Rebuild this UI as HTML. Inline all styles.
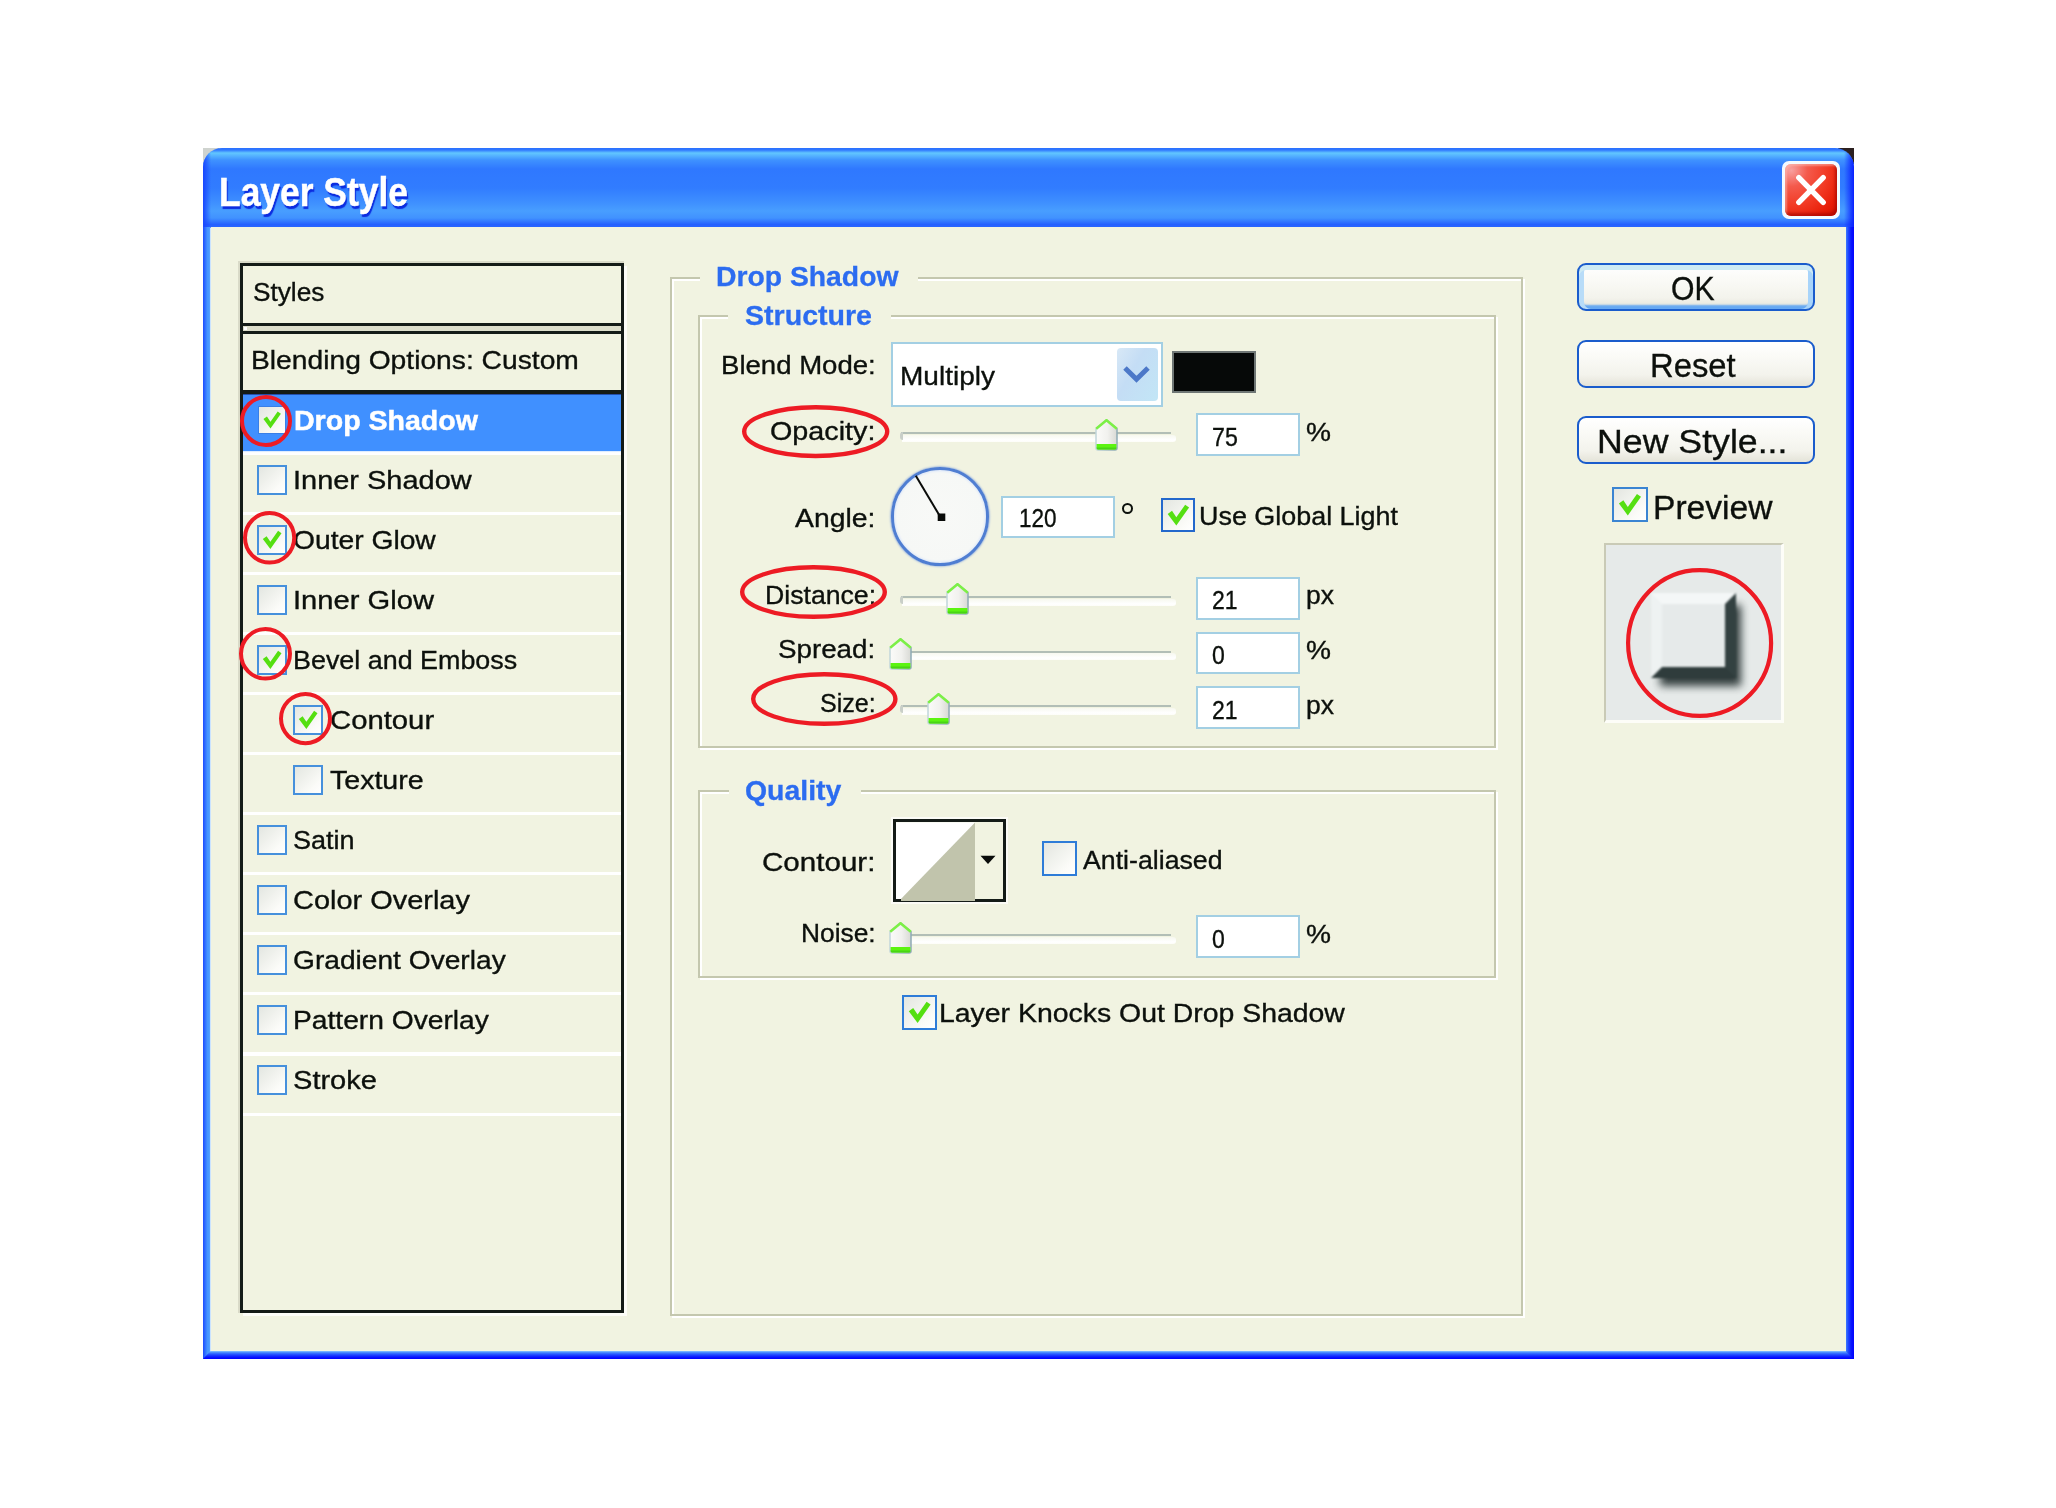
<!DOCTYPE html>
<html><head><meta charset="utf-8"><title>Layer Style</title><style>html,body{margin:0;padding:0;background:#fff;}body{width:2056px;height:1508px;position:relative;overflow:hidden;font-family:"Liberation Sans",sans-serif;}div,svg,span{position:absolute;}.t{white-space:nowrap;line-height:1;transform-origin:0 0;}</style></head><body>
<div style="left:203px;top:148px;width:16px;height:16px;background:#cfd3cf"></div>
<div style="left:1838px;top:148px;width:16px;height:16px;background:#2c2020"></div>
<div style="left:203px;top:148px;width:1651px;height:80px;background:linear-gradient(to bottom,#2a70ff 0px,#3078ff 2px,#62c6ff 5px,#58b8ff 7px,#3f92ff 12px,#2f78ff 21px,#317cff 40px,#3f90ff 55px,#489eff 63px,#4192ff 70px,#2560ff 76.5px,#2a66ff 80px);border-radius:19px 19px 0 0;overflow:hidden"><div style="left:0;top:0;width:8px;height:80px;background:linear-gradient(to right,#1846ff,rgba(40,100,255,0))"></div><div style="left:1641px;top:0;width:10px;height:80px;background:linear-gradient(to left,#0a20ff,rgba(40,100,255,0))"></div></div>
<div style="left:203px;top:1351px;width:1651px;height:8px;background:linear-gradient(to bottom,#8cc4ff 0,#3f80ff 22%,#2048ff 48%,#0814ff 78%,#0000ff 100%)"></div>
<div style="left:203px;top:227px;width:7.5px;height:1132px;background:linear-gradient(to right,#1c4cff 0,#2e6cff 25%,#4594ff 55%,#4a9aff 80%,#b8dcff 100%);clip-path:polygon(0 0,100% 0,100% calc(100% - 8px),0 100%)"></div>
<div style="left:1845.2px;top:227px;width:8.8px;height:1132px;background:linear-gradient(to right,#a4ceff 0,#3a74ff 14%,#1c44ff 38%,#0818ff 68%,#0000ff 100%);clip-path:polygon(0 0,100% 0,100% 100%,0 calc(100% - 8px))"></div>
<div style="left:210.5px;top:227px;width:1635.5px;height:1124px;background:#f1f3e1"></div>
<span class="t" style="left:218.6px;top:172.2px;font-size:40px;font-weight:bold;color:#fff;transform:scaleX(0.8854);-webkit-text-stroke:0.5px #fff;text-shadow:1.5px 2.5px 1px #0c2ce0;">Layer Style</span>
<div style="left:1782px;top:161px;width:58px;height:58px;border-radius:7px;background:#f4faff"></div>
<div style="left:1785px;top:164px;width:52px;height:52px;border-radius:6px;background:radial-gradient(circle at 12% 12%,#f8a0a0 0,#f45a4c 25%,#f23a24 55%,#e81e08 80%,#d81400 100%);box-shadow:inset -2px -3px 3px rgba(150,0,0,.55),inset 2px 2px 2px rgba(255,200,190,.5)"></div>
<svg style="left:1782px;top:161px" width="58" height="58" viewBox="0 0 58 58"><path d="M16.8 16.6 L41.2 41.4 M41.2 16.6 L16.8 41.4" stroke="#fff" stroke-width="5.4" stroke-linecap="round" fill="none"/></svg>
<div style="left:238.2px;top:261.2px;width:386px;height:1052px;background:#d9dac8"></div>
<div style="left:243px;top:266px;width:383.8px;height:1050px;background:#fdfdf8"></div>
<div style="left:240px;top:263px;width:384px;height:1050px;background:#141b17"></div>
<div style="left:243.2px;top:266px;width:377.8px;height:1044px;background:#f1f3e1"></div>
<div style="left:243.2px;top:322.5px;width:377.8px;height:3.5px;background:#141b17"></div>
<div style="left:243.2px;top:326px;width:377.8px;height:5px;background:#dcddca"></div>
<div style="left:243.5px;top:326.5px;width:3px;height:3px;background:#fff"></div>
<div style="left:243.2px;top:331px;width:377.8px;height:3.3px;background:#141b17"></div>
<div style="left:243.2px;top:390.3px;width:377.8px;height:3.7px;background:#141b17"></div>
<div style="left:243.2px;top:394px;width:377.8px;height:57px;background:#4090ff"></div>
<div style="left:243.2px;top:393.6px;width:377.8px;height:1.6px;background:#1a3a90;opacity:.75"></div>
<div style="left:243.2px;top:451.4px;width:377.8px;height:3.2px;background:linear-gradient(to bottom,#cfe4ff,#fff 40%)"></div>
<div style="left:243.2px;top:511.5px;width:377.8px;height:3.2px;background:#fff"></div>
<div style="left:243.2px;top:571.6px;width:377.8px;height:3.2px;background:#fff"></div>
<div style="left:243.2px;top:631.7px;width:377.8px;height:3.2px;background:#fff"></div>
<div style="left:243.2px;top:691.8px;width:377.8px;height:3.2px;background:#fff"></div>
<div style="left:243.2px;top:751.9px;width:377.8px;height:3.2px;background:#fff"></div>
<div style="left:243.2px;top:812.0px;width:377.8px;height:3.2px;background:#fff"></div>
<div style="left:243.2px;top:872.1px;width:377.8px;height:3.2px;background:#fff"></div>
<div style="left:243.2px;top:932.2px;width:377.8px;height:3.2px;background:#fff"></div>
<div style="left:243.2px;top:992.3px;width:377.8px;height:3.2px;background:#fff"></div>
<div style="left:243.2px;top:1052.4px;width:377.8px;height:3.2px;background:#fff"></div>
<div style="left:243.2px;top:1112.5px;width:377.8px;height:3.2px;background:#fff"></div>
<div style="left:258px;top:405.5px;width:28px;height:28px;box-sizing:border-box;border:1.5px solid #3a7fe6;background:linear-gradient(135deg,#e3e6e1 0,#eef0eb 35%,#fbfbf8 75%,#ffffff 100%)"></div>
<svg style="left:258px;top:405.5px" width="28" height="28" viewBox="0 0 35 35"><path d="M6.8 16.2 L11.2 13 L15.6 19.6 L24.6 6.8 L28.6 9.6 L15.6 28 Z" fill="#55df12"/></svg>
<span class="t" style="left:293.5px;top:405.5px;font-size:28.4px;font-weight:bold;color:#fff;transform:scaleX(1.0054);-webkit-text-stroke:0.5px #fff;">Drop Shadow</span>
<div style="left:257.2px;top:464.7px;width:30px;height:30px;box-sizing:border-box;border:2px solid #4690dc;background:linear-gradient(135deg,#e3e6e1 0,#eef0eb 35%,#fbfbf8 75%,#ffffff 100%)"></div>
<span class="t" style="left:293.3px;top:466.9px;font-size:26.2px;font-weight:normal;color:#0c100c;transform:scaleX(1.1059);-webkit-text-stroke:0.35px #0c100c;">Inner Shadow</span>
<div style="left:257.2px;top:524.7px;width:30px;height:30px;box-sizing:border-box;border:2px solid #4690dc;background:linear-gradient(135deg,#e3e6e1 0,#eef0eb 35%,#fbfbf8 75%,#ffffff 100%)"></div>
<svg style="left:257.2px;top:524.7px" width="30" height="30" viewBox="0 0 35 35"><path d="M6.8 16.2 L11.2 13 L15.6 19.6 L24.6 6.8 L28.6 9.6 L15.6 28 Z" fill="#55df12"/></svg>
<span class="t" style="left:293.3px;top:526.9px;font-size:26.2px;font-weight:normal;color:#0c100c;transform:scaleX(1.0777);-webkit-text-stroke:0.35px #0c100c;">Outer Glow</span>
<div style="left:257.2px;top:584.7px;width:30px;height:30px;box-sizing:border-box;border:2px solid #4690dc;background:linear-gradient(135deg,#e3e6e1 0,#eef0eb 35%,#fbfbf8 75%,#ffffff 100%)"></div>
<span class="t" style="left:293.3px;top:586.9px;font-size:26.2px;font-weight:normal;color:#0c100c;transform:scaleX(1.1130);-webkit-text-stroke:0.35px #0c100c;">Inner Glow</span>
<div style="left:257.2px;top:644.7px;width:30px;height:30px;box-sizing:border-box;border:2px solid #4690dc;background:linear-gradient(135deg,#e3e6e1 0,#eef0eb 35%,#fbfbf8 75%,#ffffff 100%)"></div>
<svg style="left:257.2px;top:644.7px" width="30" height="30" viewBox="0 0 35 35"><path d="M6.8 16.2 L11.2 13 L15.6 19.6 L24.6 6.8 L28.6 9.6 L15.6 28 Z" fill="#55df12"/></svg>
<span class="t" style="left:293.3px;top:646.9px;font-size:26.2px;font-weight:normal;color:#0c100c;transform:scaleX(1.0268);-webkit-text-stroke:0.35px #0c100c;">Bevel and Emboss</span>
<div style="left:292.7px;top:704.7px;width:30px;height:30px;box-sizing:border-box;border:2px solid #4690dc;background:linear-gradient(135deg,#e3e6e1 0,#eef0eb 35%,#fbfbf8 75%,#ffffff 100%)"></div>
<svg style="left:292.7px;top:704.7px" width="30" height="30" viewBox="0 0 35 35"><path d="M6.8 16.2 L11.2 13 L15.6 19.6 L24.6 6.8 L28.6 9.6 L15.6 28 Z" fill="#55df12"/></svg>
<span class="t" style="left:329.8px;top:706.9px;font-size:26.2px;font-weight:normal;color:#0c100c;transform:scaleX(1.1179);-webkit-text-stroke:0.35px #0c100c;">Contour</span>
<div style="left:292.7px;top:764.7px;width:30px;height:30px;box-sizing:border-box;border:2px solid #4690dc;background:linear-gradient(135deg,#e3e6e1 0,#eef0eb 35%,#fbfbf8 75%,#ffffff 100%)"></div>
<span class="t" style="left:329.8px;top:766.9px;font-size:26.2px;font-weight:normal;color:#0c100c;transform:scaleX(1.0894);-webkit-text-stroke:0.35px #0c100c;">Texture</span>
<div style="left:257.2px;top:824.7px;width:30px;height:30px;box-sizing:border-box;border:2px solid #4690dc;background:linear-gradient(135deg,#e3e6e1 0,#eef0eb 35%,#fbfbf8 75%,#ffffff 100%)"></div>
<span class="t" style="left:293.3px;top:826.9px;font-size:26.2px;font-weight:normal;color:#0c100c;transform:scaleX(1.0315);-webkit-text-stroke:0.35px #0c100c;">Satin</span>
<div style="left:257.2px;top:884.7px;width:30px;height:30px;box-sizing:border-box;border:2px solid #4690dc;background:linear-gradient(135deg,#e3e6e1 0,#eef0eb 35%,#fbfbf8 75%,#ffffff 100%)"></div>
<span class="t" style="left:293.3px;top:886.9px;font-size:26.2px;font-weight:normal;color:#0c100c;transform:scaleX(1.1052);-webkit-text-stroke:0.35px #0c100c;">Color Overlay</span>
<div style="left:257.2px;top:944.7px;width:30px;height:30px;box-sizing:border-box;border:2px solid #4690dc;background:linear-gradient(135deg,#e3e6e1 0,#eef0eb 35%,#fbfbf8 75%,#ffffff 100%)"></div>
<span class="t" style="left:293.3px;top:946.9px;font-size:26.2px;font-weight:normal;color:#0c100c;transform:scaleX(1.0746);-webkit-text-stroke:0.35px #0c100c;">Gradient Overlay</span>
<div style="left:257.2px;top:1004.7px;width:30px;height:30px;box-sizing:border-box;border:2px solid #4690dc;background:linear-gradient(135deg,#e3e6e1 0,#eef0eb 35%,#fbfbf8 75%,#ffffff 100%)"></div>
<span class="t" style="left:293.3px;top:1006.9px;font-size:26.2px;font-weight:normal;color:#0c100c;transform:scaleX(1.0768);-webkit-text-stroke:0.35px #0c100c;">Pattern Overlay</span>
<div style="left:257.2px;top:1064.7px;width:30px;height:30px;box-sizing:border-box;border:2px solid #4690dc;background:linear-gradient(135deg,#e3e6e1 0,#eef0eb 35%,#fbfbf8 75%,#ffffff 100%)"></div>
<span class="t" style="left:293.3px;top:1066.9px;font-size:26.2px;font-weight:normal;color:#0c100c;transform:scaleX(1.1093);-webkit-text-stroke:0.35px #0c100c;">Stroke</span>
<span class="t" style="left:252.6px;top:278.8px;font-size:26.2px;font-weight:normal;color:#0c100c;transform:scaleX(1.0007);-webkit-text-stroke:0.35px #0c100c;">Styles</span>
<span class="t" style="left:251.0px;top:347.4px;font-size:26.2px;font-weight:normal;color:#0c100c;transform:scaleX(1.0776);-webkit-text-stroke:0.35px #0c100c;">Blending Options: Custom</span>
<div style="left:672px;top:279px;width:853.2px;height:1039px;box-sizing:border-box;border:2.2px solid #fff"></div>
<div style="left:670px;top:277px;width:853.2px;height:1039px;box-sizing:border-box;border:2px solid #c4c7ae"></div>
<div style="left:700px;top:276px;width:218px;height:6px;background:#f1f3e1"></div>
<div style="left:700px;top:317px;width:798px;height:433px;box-sizing:border-box;border:2.2px solid #fff"></div>
<div style="left:698px;top:315px;width:798px;height:433px;box-sizing:border-box;border:2px solid #c4c7ae"></div>
<div style="left:727.5px;top:314px;width:163.0px;height:6px;background:#f1f3e1"></div>
<div style="left:700px;top:792px;width:798px;height:187.5px;box-sizing:border-box;border:2.2px solid #fff"></div>
<div style="left:698px;top:790px;width:798px;height:187.5px;box-sizing:border-box;border:2px solid #c4c7ae"></div>
<div style="left:728.5px;top:789px;width:132.0px;height:6px;background:#f1f3e1"></div>
<span class="t" style="left:716.0px;top:263.3px;font-size:28.0px;font-weight:bold;color:#2c6cf0;transform:scaleX(1.0114);-webkit-text-stroke:0.3px #2c6cf0;">Drop Shadow</span>
<span class="t" style="left:744.5px;top:301.8px;font-size:28.0px;font-weight:bold;color:#2c6cf0;transform:scaleX(1.0203);-webkit-text-stroke:0.3px #2c6cf0;">Structure</span>
<span class="t" style="left:744.6px;top:777.0px;font-size:28.0px;font-weight:bold;color:#2c6cf0;transform:scaleX(1.0157);-webkit-text-stroke:0.3px #2c6cf0;">Quality</span>
<span class="t" style="left:720.8px;top:352.4px;font-size:26.1px;font-weight:normal;color:#0c100c;transform:scaleX(1.0563);-webkit-text-stroke:0.35px #0c100c;">Blend Mode:</span>
<span class="t" style="left:770.2px;top:418.1px;font-size:26.1px;font-weight:normal;color:#0c100c;transform:scaleX(1.1010);-webkit-text-stroke:0.35px #0c100c;">Opacity:</span>
<span class="t" style="left:795.2px;top:505.0px;font-size:26.1px;font-weight:normal;color:#0c100c;transform:scaleX(1.0864);-webkit-text-stroke:0.35px #0c100c;">Angle:</span>
<span class="t" style="left:764.5px;top:581.6px;font-size:26.1px;font-weight:normal;color:#0c100c;transform:scaleX(1.0211);-webkit-text-stroke:0.35px #0c100c;">Distance:</span>
<span class="t" style="left:778.4px;top:636.4px;font-size:26.1px;font-weight:normal;color:#0c100c;transform:scaleX(1.0633);-webkit-text-stroke:0.35px #0c100c;">Spread:</span>
<span class="t" style="left:819.9px;top:690.4px;font-size:26.1px;font-weight:normal;color:#0c100c;transform:scaleX(0.9599);-webkit-text-stroke:0.35px #0c100c;">Size:</span>
<span class="t" style="left:762.2px;top:849.4px;font-size:26.1px;font-weight:normal;color:#0c100c;transform:scaleX(1.1328);-webkit-text-stroke:0.35px #0c100c;">Contour:</span>
<span class="t" style="left:801.0px;top:920.2px;font-size:26.1px;font-weight:normal;color:#0c100c;transform:scaleX(1.0084);-webkit-text-stroke:0.35px #0c100c;">Noise:</span>
<div style="left:891px;top:342px;width:271.5px;height:65px;box-sizing:border-box;border:2.2px solid #a3cfe3;background:#fff"></div>
<div style="left:1116.5px;top:348px;width:41px;height:53px;border-radius:4px;background:linear-gradient(120deg,#d8e8f6 0,#c4ddf5 40%,#c2e6f6 100%)"></div>
<svg style="left:1116px;top:348px" width="42" height="53" viewBox="0 0 42 53"><path d="M9 20 L20.5 31.2 L32 20" stroke="#4c78c8" stroke-width="5" fill="none" stroke-linejoin="miter"/></svg>
<span class="t" style="left:899.6px;top:363.4px;font-size:26.1px;font-weight:normal;color:#0c100c;transform:scaleX(1.0738);-webkit-text-stroke:0.35px #0c100c;">Multiply</span>
<div style="left:1172px;top:351px;width:84px;height:41.5px;background:#6f7775"></div>
<div style="left:1174px;top:353px;width:80px;height:37.5px;background:#060908"></div>
<div style="left:1196.3px;top:413.4px;width:104px;height:42.5px;box-sizing:border-box;border:2.2px solid #a3cfe3;background:#fff"></div>
<span class="t" style="left:1212.0px;top:423.9px;font-size:26.1px;font-weight:normal;color:#0c100c;transform:scaleX(0.8887);-webkit-text-stroke:0.35px #0c100c;">75</span>
<div style="left:1000.8px;top:495.5px;width:114.5px;height:42.3px;box-sizing:border-box;border:2.2px solid #a3cfe3;background:#fff"></div>
<span class="t" style="left:1019.0px;top:505.0px;font-size:26.1px;font-weight:normal;color:#0c100c;transform:scaleX(0.8634);-webkit-text-stroke:0.35px #0c100c;">120</span>
<div style="left:1196.3px;top:577px;width:103.8px;height:42.8px;box-sizing:border-box;border:2.2px solid #a3cfe3;background:#fff"></div>
<span class="t" style="left:1211.6px;top:587.4px;font-size:26.1px;font-weight:normal;color:#0c100c;transform:scaleX(0.8818);-webkit-text-stroke:0.35px #0c100c;">21</span>
<div style="left:1196.3px;top:631.7px;width:103.8px;height:42.5px;box-sizing:border-box;border:2.2px solid #a3cfe3;background:#fff"></div>
<span class="t" style="left:1211.8px;top:642.2px;font-size:26.1px;font-weight:normal;color:#0c100c;transform:scaleX(0.8817);-webkit-text-stroke:0.35px #0c100c;">0</span>
<div style="left:1196.3px;top:686.4px;width:103.8px;height:42.5px;box-sizing:border-box;border:2.2px solid #a3cfe3;background:#fff"></div>
<span class="t" style="left:1211.6px;top:696.9px;font-size:26.1px;font-weight:normal;color:#0c100c;transform:scaleX(0.8818);-webkit-text-stroke:0.35px #0c100c;">21</span>
<div style="left:1196.3px;top:915.4px;width:103.8px;height:43px;box-sizing:border-box;border:2.2px solid #a3cfe3;background:#fff"></div>
<span class="t" style="left:1211.8px;top:926.2px;font-size:26.1px;font-weight:normal;color:#0c100c;transform:scaleX(0.8817);-webkit-text-stroke:0.35px #0c100c;">0</span>
<span class="t" style="left:1306.0px;top:418.8px;font-size:26.1px;font-weight:normal;color:#0c100c;transform:scaleX(1.0772);-webkit-text-stroke:0.35px #0c100c;">%</span>
<span class="t" style="left:1305.7px;top:582.4px;font-size:26.1px;font-weight:normal;color:#0c100c;transform:scaleX(1.0157);-webkit-text-stroke:0.35px #0c100c;">px</span>
<span class="t" style="left:1305.7px;top:637.1px;font-size:26.1px;font-weight:normal;color:#0c100c;transform:scaleX(1.0772);-webkit-text-stroke:0.35px #0c100c;">%</span>
<span class="t" style="left:1305.7px;top:691.8px;font-size:26.1px;font-weight:normal;color:#0c100c;transform:scaleX(1.0157);-webkit-text-stroke:0.35px #0c100c;">px</span>
<span class="t" style="left:1306.3px;top:920.6px;font-size:26.1px;font-weight:normal;color:#0c100c;transform:scaleX(1.0772);-webkit-text-stroke:0.35px #0c100c;">%</span>
<div style="left:1122px;top:503px;width:11px;height:11px;box-sizing:border-box;border:2.6px solid #0c100c;border-radius:50%"></div>
<div style="left:901.5px;top:435px;width:274.5px;height:6.8px;background:linear-gradient(to bottom,#f7f8ef,#ffffff 70%,#fdfdf8);border-radius:0 3px 3px 0"></div>
<div style="left:900.5px;top:432.1px;width:270.5px;height:2.2px;background:#b2beb6"></div>
<div style="left:899.5px;top:432px;width:3px;height:8px;background:#c9cfc8;border-radius:3px 0 0 3px"></div>
<svg style="left:1095.0px;top:419.1px" width="23" height="32" viewBox="0 0 23 32"><defs><linearGradient id="tg" x1="0" x2="1" y1="0" y2="0"><stop offset="0" stop-color="#fbfbf9"/><stop offset=".55" stop-color="#f1f1ee"/><stop offset="1" stop-color="#d8d9d4"/></linearGradient><linearGradient id="ts" x1="0" x2="1" y1="0" y2="0"><stop offset="0" stop-color="#c2d6da"/><stop offset="1" stop-color="#8eaab4"/></linearGradient></defs><path d="M1 9.5 L11.5 0.8 L22 9.5 L22 29 Q22 31 20 31 L3 31 Q1 31 1 29 Z" fill="url(#tg)" stroke="url(#ts)" stroke-width="1.5"/><path d="M1.2 9.8 L11.5 1.2 L21.8 9.8" stroke="#7cf046" stroke-width="2.5" fill="none"/><path d="M1.6 25 L21.4 25 L21.4 29 Q21.4 30.6 19.6 30.6 L3.4 30.6 Q1.6 30.6 1.6 29 Z" fill="#5cf410"/><path d="M1.6 28.6 L21.4 28.6 L21.4 29 Q21.4 30.6 19.6 30.6 L3.4 30.6 Q1.6 30.6 1.6 29 Z" fill="#48d416"/></svg>
<div style="left:901.5px;top:598.8px;width:274.5px;height:6.8px;background:linear-gradient(to bottom,#f7f8ef,#ffffff 70%,#fdfdf8);border-radius:0 3px 3px 0"></div>
<div style="left:900.5px;top:595.9px;width:270.5px;height:2.2px;background:#b2beb6"></div>
<div style="left:899.5px;top:595.8px;width:3px;height:8px;background:#c9cfc8;border-radius:3px 0 0 3px"></div>
<svg style="left:946.2px;top:583.1px" width="23" height="32" viewBox="0 0 23 32"><defs><linearGradient id="tg" x1="0" x2="1" y1="0" y2="0"><stop offset="0" stop-color="#fbfbf9"/><stop offset=".55" stop-color="#f1f1ee"/><stop offset="1" stop-color="#d8d9d4"/></linearGradient><linearGradient id="ts" x1="0" x2="1" y1="0" y2="0"><stop offset="0" stop-color="#c2d6da"/><stop offset="1" stop-color="#8eaab4"/></linearGradient></defs><path d="M1 9.5 L11.5 0.8 L22 9.5 L22 29 Q22 31 20 31 L3 31 Q1 31 1 29 Z" fill="url(#tg)" stroke="url(#ts)" stroke-width="1.5"/><path d="M1.2 9.8 L11.5 1.2 L21.8 9.8" stroke="#7cf046" stroke-width="2.5" fill="none"/><path d="M1.6 25 L21.4 25 L21.4 29 Q21.4 30.6 19.6 30.6 L3.4 30.6 Q1.6 30.6 1.6 29 Z" fill="#5cf410"/><path d="M1.6 28.6 L21.4 28.6 L21.4 29 Q21.4 30.6 19.6 30.6 L3.4 30.6 Q1.6 30.6 1.6 29 Z" fill="#48d416"/></svg>
<div style="left:901.5px;top:653.4px;width:274.5px;height:6.8px;background:linear-gradient(to bottom,#f7f8ef,#ffffff 70%,#fdfdf8);border-radius:0 3px 3px 0"></div>
<div style="left:900.5px;top:650.5px;width:270.5px;height:2.2px;background:#b2beb6"></div>
<div style="left:899.5px;top:650.4px;width:3px;height:8px;background:#c9cfc8;border-radius:3px 0 0 3px"></div>
<svg style="left:888.6px;top:637.9px" width="23" height="32" viewBox="0 0 23 32"><defs><linearGradient id="tg" x1="0" x2="1" y1="0" y2="0"><stop offset="0" stop-color="#fbfbf9"/><stop offset=".55" stop-color="#f1f1ee"/><stop offset="1" stop-color="#d8d9d4"/></linearGradient><linearGradient id="ts" x1="0" x2="1" y1="0" y2="0"><stop offset="0" stop-color="#c2d6da"/><stop offset="1" stop-color="#8eaab4"/></linearGradient></defs><path d="M1 9.5 L11.5 0.8 L22 9.5 L22 29 Q22 31 20 31 L3 31 Q1 31 1 29 Z" fill="url(#tg)" stroke="url(#ts)" stroke-width="1.5"/><path d="M1.2 9.8 L11.5 1.2 L21.8 9.8" stroke="#7cf046" stroke-width="2.5" fill="none"/><path d="M1.6 25 L21.4 25 L21.4 29 Q21.4 30.6 19.6 30.6 L3.4 30.6 Q1.6 30.6 1.6 29 Z" fill="#5cf410"/><path d="M1.6 28.6 L21.4 28.6 L21.4 29 Q21.4 30.6 19.6 30.6 L3.4 30.6 Q1.6 30.6 1.6 29 Z" fill="#48d416"/></svg>
<div style="left:901.5px;top:708px;width:274.5px;height:6.8px;background:linear-gradient(to bottom,#f7f8ef,#ffffff 70%,#fdfdf8);border-radius:0 3px 3px 0"></div>
<div style="left:900.5px;top:705.1px;width:270.5px;height:2.2px;background:#b2beb6"></div>
<div style="left:899.5px;top:705px;width:3px;height:8px;background:#c9cfc8;border-radius:3px 0 0 3px"></div>
<svg style="left:926.8px;top:692.5px" width="23" height="32" viewBox="0 0 23 32"><defs><linearGradient id="tg" x1="0" x2="1" y1="0" y2="0"><stop offset="0" stop-color="#fbfbf9"/><stop offset=".55" stop-color="#f1f1ee"/><stop offset="1" stop-color="#d8d9d4"/></linearGradient><linearGradient id="ts" x1="0" x2="1" y1="0" y2="0"><stop offset="0" stop-color="#c2d6da"/><stop offset="1" stop-color="#8eaab4"/></linearGradient></defs><path d="M1 9.5 L11.5 0.8 L22 9.5 L22 29 Q22 31 20 31 L3 31 Q1 31 1 29 Z" fill="url(#tg)" stroke="url(#ts)" stroke-width="1.5"/><path d="M1.2 9.8 L11.5 1.2 L21.8 9.8" stroke="#7cf046" stroke-width="2.5" fill="none"/><path d="M1.6 25 L21.4 25 L21.4 29 Q21.4 30.6 19.6 30.6 L3.4 30.6 Q1.6 30.6 1.6 29 Z" fill="#5cf410"/><path d="M1.6 28.6 L21.4 28.6 L21.4 29 Q21.4 30.6 19.6 30.6 L3.4 30.6 Q1.6 30.6 1.6 29 Z" fill="#48d416"/></svg>
<div style="left:901.5px;top:937.2px;width:274.5px;height:6.8px;background:linear-gradient(to bottom,#f7f8ef,#ffffff 70%,#fdfdf8);border-radius:0 3px 3px 0"></div>
<div style="left:900.5px;top:934.3000000000001px;width:270.5px;height:2.2px;background:#b2beb6"></div>
<div style="left:899.5px;top:934.2px;width:3px;height:8px;background:#c9cfc8;border-radius:3px 0 0 3px"></div>
<svg style="left:888.6px;top:921.7px" width="23" height="32" viewBox="0 0 23 32"><defs><linearGradient id="tg" x1="0" x2="1" y1="0" y2="0"><stop offset="0" stop-color="#fbfbf9"/><stop offset=".55" stop-color="#f1f1ee"/><stop offset="1" stop-color="#d8d9d4"/></linearGradient><linearGradient id="ts" x1="0" x2="1" y1="0" y2="0"><stop offset="0" stop-color="#c2d6da"/><stop offset="1" stop-color="#8eaab4"/></linearGradient></defs><path d="M1 9.5 L11.5 0.8 L22 9.5 L22 29 Q22 31 20 31 L3 31 Q1 31 1 29 Z" fill="url(#tg)" stroke="url(#ts)" stroke-width="1.5"/><path d="M1.2 9.8 L11.5 1.2 L21.8 9.8" stroke="#7cf046" stroke-width="2.5" fill="none"/><path d="M1.6 25 L21.4 25 L21.4 29 Q21.4 30.6 19.6 30.6 L3.4 30.6 Q1.6 30.6 1.6 29 Z" fill="#5cf410"/><path d="M1.6 28.6 L21.4 28.6 L21.4 29 Q21.4 30.6 19.6 30.6 L3.4 30.6 Q1.6 30.6 1.6 29 Z" fill="#48d416"/></svg>
<div style="left:890.6px;top:467px;width:98.8px;height:98.8px;box-sizing:border-box;border-radius:50%;border:3.2px solid #4f7ed2;background:radial-gradient(circle at 50% 50%,#f8f9f7 0,#f6f8f6 70%,#f0f3f2 88%,#e6ecf2 100%);box-shadow:0 0 2px .6px #8aa8e0,inset 0 0 2px 1.2px #dde8fa"></div>
<svg style="left:890px;top:467px" width="100" height="100" viewBox="0 0 100 100"><path d="M49.5 48.5 L25.8 8.7" stroke="#0a0c0a" stroke-width="2" fill="none"/><rect x="47.7" y="46.5" width="7.6" height="7.5" fill="#080a08"/></svg>
<div style="left:1160.8px;top:497.8px;width:34.4px;height:34.4px;box-sizing:border-box;border:2.8px solid #2368cc;background:linear-gradient(135deg,#e3e6e1 0,#eef0eb 35%,#fbfbf8 75%,#ffffff 100%)"></div>
<svg style="left:1160.8px;top:497.8px" width="34.4" height="34.4" viewBox="0 0 35 35"><path d="M6.8 16.2 L11.2 13 L15.6 19.6 L24.6 6.8 L28.6 9.6 L15.6 28 Z" fill="#55df12"/></svg>
<span class="t" style="left:1199.0px;top:502.9px;font-size:26.1px;font-weight:normal;color:#0c100c;transform:scaleX(1.0313);-webkit-text-stroke:0.35px #0c100c;">Use Global Light</span>
<div style="left:1042px;top:841.4px;width:35px;height:35px;box-sizing:border-box;border:2.8px solid #2e7cd8;background:linear-gradient(135deg,#e3e6e1 0,#eef0eb 35%,#fbfbf8 75%,#ffffff 100%)"></div>
<span class="t" style="left:1083.0px;top:846.8px;font-size:26.1px;font-weight:normal;color:#0c100c;transform:scaleX(1.0236);-webkit-text-stroke:0.35px #0c100c;">Anti-aliased</span>
<div style="left:902px;top:994.6px;width:35px;height:35px;box-sizing:border-box;border:2.8px solid #2e7cd8;background:linear-gradient(135deg,#e3e6e1 0,#eef0eb 35%,#fbfbf8 75%,#ffffff 100%)"></div>
<svg style="left:902px;top:994.6px" width="35" height="35" viewBox="0 0 35 35"><path d="M6.8 16.2 L11.2 13 L15.6 19.6 L24.6 6.8 L28.6 9.6 L15.6 28 Z" fill="#55df12"/></svg>
<span class="t" style="left:939.4px;top:1000.0px;font-size:26.1px;font-weight:normal;color:#0c100c;transform:scaleX(1.0889);-webkit-text-stroke:0.35px #0c100c;">Layer Knocks Out Drop Shadow</span>
<div style="left:1612px;top:486.5px;width:35.5px;height:35.5px;box-sizing:border-box;border:2.8px solid #3a84d2;background:linear-gradient(135deg,#e3e6e1 0,#eef0eb 35%,#fbfbf8 75%,#ffffff 100%)"></div>
<svg style="left:1612px;top:486.5px" width="35.5" height="35.5" viewBox="0 0 35 35"><path d="M6.8 16.2 L11.2 13 L15.6 19.6 L24.6 6.8 L28.6 9.6 L15.6 28 Z" fill="#55df12"/></svg>
<span class="t" style="left:1652.6px;top:490.8px;font-size:33.4px;font-weight:normal;color:#0c100c;transform:scaleX(1.0059);-webkit-text-stroke:0.35px #0c100c;">Preview</span>
<div style="left:890.5px;top:817.2px;width:117.5px;height:86.5px;background:#fbfbf6"></div>
<div style="left:892.5px;top:819.2px;width:113.5px;height:82.5px;background:#141b17"></div>
<div style="left:895.8px;top:822.4px;width:107px;height:76.2px;background:#f1f3e1"></div>
<svg style="left:895.8px;top:822.4px" width="79.2" height="79.3" viewBox="0 0 80 79.3"><rect width="80" height="79.3" fill="#fff"/><path d="M3 79.3 L80 0 L80 79.3 Z" fill="#c1c4ac"/></svg>
<div style="left:892.5px;top:898.6px;width:8px;height:3.1px;background:#141b17"></div>
<svg style="left:980px;top:855px" width="16" height="10" viewBox="0 0 16 10"><path d="M0.5 0.8 L15.5 0.8 L8 9 Z" fill="#0a0c0a"/></svg>
<div style="left:1576.5px;top:263px;width:238.5px;height:47.5px;box-sizing:border-box;border:2.5px solid #1a5ccc;border-radius:9px;background:linear-gradient(to bottom,#ffffff 0,#fafaf6 35%,#f3f3ec 75%,#e4e3d8 100%);box-shadow:inset 0 5px 0 #cdeaf4,inset 5px 0 0 #b8dcf8,inset -5px 0 0 #a8d4fa,inset 0 -4px 2px #66a8f2;"></div>
<span class="t" style="left:1670.8px;top:272.4px;font-size:33.4px;font-weight:normal;color:#0c100c;transform:scaleX(0.9035);-webkit-text-stroke:0.35px #0c100c;">OK</span>
<div style="left:1576.5px;top:339.7px;width:238.5px;height:48.2px;box-sizing:border-box;border:2.5px solid #1a5ccc;border-radius:9px;background:linear-gradient(to bottom,#ffffff 0,#fafaf6 35%,#f3f3ec 75%,#e4e3d8 100%);"></div>
<span class="t" style="left:1650.2px;top:348.9px;font-size:33.4px;font-weight:normal;color:#0c100c;transform:scaleX(0.9811);-webkit-text-stroke:0.35px #0c100c;">Reset</span>
<div style="left:1576.5px;top:415.8px;width:238.5px;height:48.6px;box-sizing:border-box;border:2.5px solid #1a5ccc;border-radius:9px;background:linear-gradient(to bottom,#ffffff 0,#fafaf6 35%,#f3f3ec 75%,#e4e3d8 100%);"></div>
<span class="t" style="left:1596.6px;top:425.4px;font-size:33.4px;font-weight:normal;color:#0c100c;transform:scaleX(1.0691);-webkit-text-stroke:0.35px #0c100c;">New Style...</span>
<div style="left:1603.8px;top:543.4px;width:180.4px;height:180px;box-sizing:border-box;background:#e6eae9;border-top:2.5px solid #c9cab6;border-left:2.5px solid #c9cab6;border-right:3.5px solid #fdfdf8;border-bottom:3.5px solid #fdfdf8"></div>
<div style="left:1660px;top:605px;width:81px;height:81px;background:#243030;filter:blur(4.5px);opacity:.92"></div>
<div style="left:1651px;top:593px;width:85px;height:85px;box-sizing:border-box;background:#e6eaea;border-top:11px solid #f4f7f7;border-left:11px solid #eef2f2;border-right:11px solid #334141;border-bottom:11px solid #2f3c3c;filter:blur(.9px)"></div>
<svg style="left:237.7px;top:392.7px" width="56.0" height="56.0"><ellipse cx="28.0" cy="28.0" rx="24.0" ry="24.0" fill="none" stroke="#ed1b24" stroke-width="4.0"/></svg>
<svg style="left:241.3px;top:508.5px" width="57.2" height="57.6"><ellipse cx="28.6" cy="28.8" rx="24.6" ry="24.8" fill="none" stroke="#ed1b24" stroke-width="4.0"/></svg>
<svg style="left:237.1px;top:624.9px" width="57.0" height="57.6"><ellipse cx="28.5" cy="28.8" rx="24.5" ry="24.8" fill="none" stroke="#ed1b24" stroke-width="4.0"/></svg>
<svg style="left:276.9px;top:690.0px" width="57.0" height="57.2"><ellipse cx="28.5" cy="28.6" rx="24.5" ry="24.6" fill="none" stroke="#ed1b24" stroke-width="4.0"/></svg>
<svg style="left:740.3px;top:402.7px" width="151.4" height="57.2"><ellipse cx="75.7" cy="28.6" rx="71.5" ry="24.4" fill="none" stroke="#ed1b24" stroke-width="4.4"/></svg>
<svg style="left:738.0px;top:563.2px" width="151.0" height="58.0"><ellipse cx="75.5" cy="29.0" rx="71.3" ry="24.8" fill="none" stroke="#ed1b24" stroke-width="4.4"/></svg>
<svg style="left:749.2px;top:669.8px" width="150.6" height="58.0"><ellipse cx="75.3" cy="29.0" rx="71.1" ry="24.8" fill="none" stroke="#ed1b24" stroke-width="4.4"/></svg>
<svg style="left:1624.0px;top:566.0px" width="151.2" height="154.0"><ellipse cx="75.6" cy="77.0" rx="71.5" ry="72.9" fill="none" stroke="#ed1b24" stroke-width="4.2"/></svg>
</body></html>
